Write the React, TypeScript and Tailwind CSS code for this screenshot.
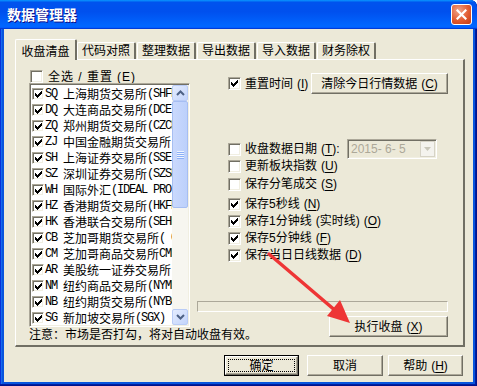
import React from 'react';

const markets: [string, string, string][] = [
  ['SQ', '上海期货交易所', '(SHFE)'],
  ['DQ', '大连商品交易所', '(DCE)'],
  ['ZQ', '郑州期货交易所', '(CZCE)'],
  ['ZJ', '中国金融期货交易所', '(CFFEX)'],
  ['SH', '上海证券交易所', '(SSE)'],
  ['SZ', '深圳证券交易所', '(SZSE)'],
  ['WH', '国际外汇', '(IDEAL PRO)'],
  ['HZ', '香港期货交易所', '(HKFE)'],
  ['HK', '香港联合交易所', '(SEHK)'],
  ['CB', '芝加哥期货交易所', '( CBOT)'],
  ['CM', '芝加哥商品交易所', 'CME'],
  ['AR', '美股统一证券交易所', ''],
  ['NM', '纽约商品交易所', '(NYMEX)'],
  ['NB', '纽约期货交易所', '(NYBOT)'],
  ['SG', '新加坡交易所', '(SGX)'],
];

const sunken =
  'border border-t-[#ACA899] border-l-[#ACA899] border-r-white border-b-white shadow-[inset_1px_1px_0_#716F64,inset_-1px_-1px_0_#F1EFE2]';
const raised =
  'border border-t-white border-l-white border-r-[#716F64] border-b-[#716F64] shadow-[inset_-1px_-1px_0_#ACA899]';

const Check: React.FC<{ checked?: boolean; size?: string }> = ({ checked, size = 'w-[13px] h-[13px]' }) => (
  <span className={`flex shrink-0 items-center justify-center bg-white ${sunken} ${size}`}>
    {checked && (
      <svg width="7" height="7" viewBox="0 0 7 7" shapeRendering="crispEdges">
        <polygon points="0,2 2,4 6,0 7,0 7,2 2,7 0,5" fill="#000" />
      </svg>
    )}
  </span>
);

const Acc: React.FC<{ k: string }> = ({ k }) => (
  <span className="ml-[4px]">
    (<u className="underline-offset-2">{k}</u>)
  </span>
);

const Opt: React.FC<{ checked?: boolean; label: string; k: string; extra?: string; className?: string }> = ({ checked, label, k, extra, className = '' }) => (
  <div className={`flex items-center h-[13px] ${className}`}>
    <Check checked={checked} />
    <span className="ml-[4px] whitespace-nowrap leading-[13px]">
      {label}
      {extra && <span className="ml-[4px]">{extra}</span>}
      <Acc k={k} />
    </span>
  </div>
);

const Btn: React.FC<{ children: React.ReactNode; className?: string }> = ({ children, className = '' }) => (
  <div className={`flex items-center justify-center bg-[#ECE9D8] ${raised} ${className}`}>{children}</div>
);

const Chevron: React.FC<{ up?: boolean }> = ({ up }) => (
  <svg width="9" height="6" viewBox="0 0 9 6">
    <path d={up ? 'M1 5 L4.5 1.5 L8 5' : 'M1 1 L4.5 4.5 L8 1'} stroke="#4D6185" strokeWidth="2" fill="none" />
  </svg>
);

const ScrollBar = () => (
  <div className="flex flex-col w-[16px] h-full bg-[#F7F6F0]">
    <div className="h-[16px] flex items-center justify-center rounded-[2px] border border-[#B9CCF7] bg-[linear-gradient(135deg,#E4ECFE,#C3D4FB)]">
      <Chevron up />
    </div>
    <div className="h-[107px] flex flex-col items-center justify-center gap-[1px] rounded-[2px] border border-[#A6BEF2] bg-[linear-gradient(90deg,#CAD9FD,#BCD0FB)]">
      {[0, 1, 2, 3].map(i => (
        <div key={i} className="w-[7px] h-[1px] bg-[#EEF4FE] shadow-[0_1px_0_#8CB0F8]" />
      ))}
    </div>
    <div className="flex-1" />
    <div className="h-[16px] flex items-center justify-center rounded-[2px] border border-[#B9CCF7] bg-[linear-gradient(135deg,#E4ECFE,#C3D4FB)]">
      <Chevron />
    </div>
  </div>
);

const tabs = ['代码对照', '整理数据', '导出数据', '导入数据', '财务除权'];

export default function App() {
  return (
    <div className="relative w-[477px] h-[386px] flex flex-col bg-[#0855DD] rounded-tr-[7px] overflow-hidden font-['Liberation_Sans','Noto_Sans_CJK_SC',sans-serif] text-[12px] text-black shadow-[inset_-1px_-1px_0_#00138C,inset_-2px_-2px_0_#001EA0,inset_1px_1px_0_#0831D9,inset_2px_2px_0_#166AEE]">
      {/* title bar */}
      <div className="h-[29px] shrink-0 flex items-center pl-[7px] pr-[5px] bg-[linear-gradient(180deg,#0997ff,#0053ee_8%,#0050ee_40%,#06f_88%,#06f_93%,#005bff_95%,#003dd7_96%,#003dd7)]">
        <span className="text-white font-bold text-[14px] leading-none [text-shadow:1px_1px_#0F1089]">数据管理器</span>
        <div className="ml-auto w-[21px] h-[21px] flex items-center justify-center rounded-[3px] border border-white bg-[radial-gradient(circle_at_35%_30%,#F0A48A,#E25B30_55%,#C23B16)]">
          <svg width="11" height="11" viewBox="0 0 11 11">
            <path d="M1.5 1.5 L9.5 9.5 M9.5 1.5 L1.5 9.5" stroke="#fff" strokeWidth="2.2" strokeLinecap="square" />
          </svg>
        </div>
      </div>

      {/* client */}
      <div className="flex-1 mx-[4px] mb-[4px] bg-[#ECE9D8] flex flex-col pt-[10px] pl-[11px]">
        {/* tab strip */}
        <div className="flex items-end h-[20px]">
          <div className="relative z-10 w-[62px] h-[21px] -mb-[1px] flex items-start justify-center pt-[3px] bg-[#ECE9D8] border-t border-l border-white border-r-2 border-r-[#716F64] rounded-t-[2px]">
            收盘清盘
          </div>
          {tabs.map((t, i) => (
            <div key={t} className={`w-[59px] h-[17px] flex items-center justify-center bg-[#ECE9D8] border-t border-l border-white border-r-2 border-r-[#716F64] rounded-t-[2px] ${i > 0 ? 'ml-[1px]' : ''}`}>
              {t}
            </div>
          ))}
        </div>

        {/* tab panel */}
        <div className="w-[450px] h-[288px] flex border-t border-l border-white border-r-2 border-b-2 border-r-[#716F64] border-b-[#716F64] pl-[13px] pt-[10px] pr-[15px]">
          {/* left column */}
          <div className="w-[161px] flex flex-col">
            <div className="flex items-center h-[13px] pl-[1px]">
              <Check />
              <span className="ml-[5px] whitespace-nowrap tracking-[1px]">全选 / 重置<Acc k="E" /></span>
            </div>
            <div className={`h-[244px] flex bg-white ${sunken} p-[1px]`}>
              <div className="flex-1 overflow-hidden pt-[1px]">
                {markets.map(([code, name, suf]) => (
                  <div key={code} className="h-[16px] flex items-center pl-[1px] whitespace-nowrap">
                    <Check checked size="w-[12px] h-[12px]" />
                    <span className="ml-[1px] w-[18px] shrink-0 font-['Liberation_Mono',monospace] text-[12px] tracking-[-1.2px]">{code}</span>
                    <span className="font-['Noto_Sans_CJK_SC',sans-serif]">{name}</span>
                    <span className="font-['Liberation_Mono',monospace] text-[12px] tracking-[-1.2px]">{suf}</span>
                  </div>
                ))}
              </div>
              <ScrollBar />
            </div>
            <div className="h-[16px] flex items-center whitespace-nowrap">注意：市场是否打勾，将对自动收盘有效。</div>
          </div>

          {/* right column */}
          <div className="flex-1 ml-[7px] flex flex-col">
            <div className="mt-[3px] h-[21px] flex items-center pl-[31px]">
              <Check checked />
              <span className="ml-[4px] whitespace-nowrap">重置时间<Acc k="I" /></span>
              <Btn className="ml-auto w-[137px] h-[21px]">
                清除今日行情数据<Acc k="C" />
              </Btn>
            </div>

            <div className="mt-[45px] h-[20px] flex items-center pl-[31px]">
              <Check />
              <span className="ml-[4px] w-[102px] whitespace-nowrap">
                收盘数据日期<Acc k="T" />:
              </span>
              <div className={`w-[90px] h-[20px] flex items-center bg-[#ECE9D8] ${sunken}`}>
                <span className="pl-[3px] text-[#ACA899] whitespace-pre">2015- 6- 5</span>
                <div className="ml-auto mr-[1px] w-[15px] h-[16px] flex items-center justify-center bg-[#F4F3EE] border border-[#D6D3C6]">
                  <svg width="7" height="4" viewBox="0 0 7 4">
                    <path d="M0 0 H7 L3.5 4 Z" fill="#C9C7BA" />
                  </svg>
                </div>
              </div>
            </div>

            <div className="pl-[31px] flex flex-col">
              <Opt className="mt-[1px]" label="更新板块指数" k="U" />
              <Opt className="mt-[5px]" label="保存分笔成交" k="S" />
              <Opt className="mt-[7px]" checked label="保存5秒线" k="N" />
              <Opt className="mt-[4px]" checked label="保存1分钟线" extra="(实时线)" k="O" />
              <Opt className="mt-[4px]" checked label="保存5分钟线" k="F" />
              <Opt className="mt-[4px]" checked label="保存当日日线数据" k="D" />
            </div>

            <div className="mt-[39px] h-[11px] border border-t-[#ACA899] border-l-[#ACA899] border-r-white border-b-white" />
            <Btn className="mt-[4px] self-end w-[119px] h-[21px]">
              执行收盘<Acc k="X" />
            </Btn>
          </div>
        </div>

        {/* bottom buttons */}
        <div className="mt-[8px] flex justify-end pr-[10px]">
          <div className="w-[75px] h-[21px] border border-black flex">
            <Btn className="flex-1 p-[2px]">
              <div className="w-full h-full flex items-center justify-center border border-dotted border-black">确定</div>
            </Btn>
          </div>
          <Btn className="ml-[8px] w-[76px] h-[21px]">取消</Btn>
          <Btn className="ml-[5px] w-[75px] h-[21px]">
            帮助<Acc k="H" />
          </Btn>
        </div>
      </div>

      {/* annotation arrow */}
      <svg className="absolute left-0 top-0 pointer-events-none" width="477" height="386" viewBox="0 0 477 386">
        <line x1="269" y1="254" x2="337" y2="312" stroke="#EE3535" strokeWidth="3.5" strokeLinecap="round" />
        <polygon points="350,323 327,316 340,300" fill="#EE3535" />
      </svg>
    </div>
  );
}
